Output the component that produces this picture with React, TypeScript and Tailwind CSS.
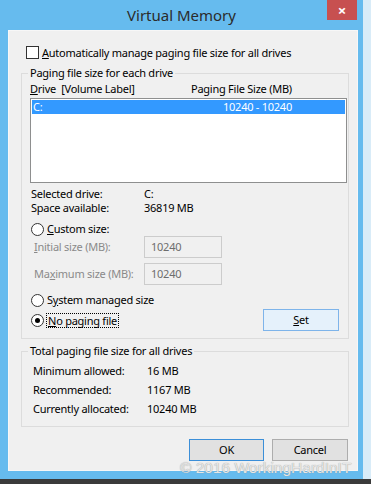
const font = { fontFamily: '"Segoe UI", "Noto Sans", "Liberation Sans", sans-serif' };

function Check() {
  return <span className="block h-[13px] w-[13px] shrink-0 border border-[#333] bg-white" />;
}

function Radio({ on }: { on?: boolean }) {
  return (
    <span className="flex h-[13px] w-[13px] shrink-0 items-center justify-center rounded-full border border-[#333] bg-white">
      {on && <span className="block h-[5px] w-[5px] rounded-full bg-black" />}
    </span>
  );
}

function Btn({ children, kind }: { children: React.ReactNode; kind?: "default" | "hover" }) {
  const look =
    kind === "default"
      ? "border-[#3c8fd8] bg-[#e1e1e1]"
      : kind === "hover"
        ? "border-[#7eb4ea] bg-[#e5f1fb]"
        : "border-[#adadad] bg-[#e1e1e1]";
  return (
    <div className={`flex h-[22px] items-center justify-center border text-[11px] text-black ${look}`}>{children}</div>
  );
}

function Group({ title, className, children }: { title: string; className: string; children: React.ReactNode }) {
  return (
    <div className={`relative ml-[12px] w-[328px] border border-[#dcdcdc] ${className}`}>
      <span className="absolute -top-[9px] left-[6px] bg-[#f0f0f0] px-[2px] text-[11px] leading-[16px] text-black">
        {title}
      </span>
      {children}
    </div>
  );
}

export default function App() {
  return (
    <div className="relative h-[484px] w-[371px] overflow-hidden bg-[#d9ecf8]" style={font}>
      <div className="flex h-[479px] w-[363px] flex-col bg-[#66bbee]">
        <div className="relative flex h-[30px] items-center justify-center">
          <span className="text-[15px] text-[#2b2b2b]">Virtual Memory</span>
          <div className="absolute right-[6px] top-0 flex h-[20px] w-[30px] items-center justify-center bg-[#c75050] text-[15px] font-bold leading-none text-white">
            ×
          </div>
        </div>

        <div className="ml-[8px] h-[441px] w-[350px] border border-[#f7f7f7] bg-[#f0f0f0] text-[11px] tracking-[-0.25px] text-black">
          <div className="ml-[17px] mt-[15px] flex h-[13px] items-center gap-[3px] leading-[13px]">
            <Check />
            <span>
              <u>A</u>utomatically manage paging file size for all drives
            </span>
          </div>

          <Group title="Paging file size for each drive" className="mt-[14px] h-[266px]">
            <div className="ml-[8px] mt-[8px] flex h-[15px] items-center">
              <span className="w-[161px]">
                <u>D</u>rive&nbsp; [Volume Label]
              </span>
              <span>Paging File Size (MB)</span>
            </div>
            <div className="ml-[8px] mt-[1px] h-[85px] w-[317px] border border-[#8e8f8f] bg-white">
              <div className="mx-[1px] mt-[1px] flex h-[14px] items-center bg-[#3399ff] pl-[1px] text-white">
                <span className="w-[190px]">C:</span>
                <span>10240 - 10240</span>
              </div>
            </div>

            <div className="ml-[9px] mt-[4px] flex h-[14px] items-center">
              <span className="w-[113px]">Selected drive:</span>
              <span>C:</span>
            </div>
            <div className="ml-[9px] flex h-[14px] items-center">
              <span className="w-[113px]">Space available:</span>
              <span>36819 MB</span>
            </div>

            <div className="ml-[9px] mt-[7px] flex h-[14px] items-center gap-[3px]">
              <Radio />
              <span>
                <u>C</u>ustom size:
              </span>
            </div>
            <div className="ml-[12px] flex h-[22px] items-center">
              <span className="w-[110px] text-[#8a8a8a]">
                <u>I</u>nitial size (MB):
              </span>
              <div className="flex h-[22px] w-[78px] items-center border border-[#cccccc] bg-[#f0f0f0] pl-[6px] text-[#6d6d6d]">
                10240
              </div>
            </div>
            <div className="ml-[12px] mt-[5px] flex h-[22px] items-center">
              <span className="w-[110px] text-[#8a8a8a]">
                Ma<u>x</u>imum size (MB):
              </span>
              <div className="flex h-[22px] w-[78px] items-center border border-[#cccccc] bg-[#f0f0f0] pl-[6px] text-[#6d6d6d]">
                10240
              </div>
            </div>

            <div className="ml-[9px] mt-[8px] flex h-[14px] items-center gap-[3px]">
              <Radio />
              <span>
                S<u>y</u>stem managed size
              </span>
            </div>
            <div className="ml-[9px] mr-[9px] mt-[2px] flex h-[22px] items-center justify-between">
              <div className="flex items-center gap-[2px]">
                <Radio on />
                <span className="border border-dotted border-black px-[1px] leading-[13px]">
                  <u>N</u>o paging file
                </span>
              </div>
              <div className="w-[76px]">
                <Btn kind="hover">
                  <u>S</u>et
                </Btn>
              </div>
            </div>
          </Group>

          <Group title="Total paging file size for all drives" className="mt-[12px] h-[76px]">
            <div className="ml-[11px] mt-[10px] flex flex-col">
              <div className="flex h-[19px] items-center">
                <span className="w-[114px]">Minimum allowed:</span>
                <span>16 MB</span>
              </div>
              <div className="flex h-[19px] items-center">
                <span className="w-[114px]">Recommended:</span>
                <span>1167 MB</span>
              </div>
              <div className="flex h-[19px] items-center">
                <span className="w-[114px]">Currently allocated:</span>
                <span>10240 MB</span>
              </div>
            </div>
          </Group>

          <div className="mr-[9px] mt-[12px] flex justify-end gap-[8px]">
            <div className="w-[75px]">
              <Btn kind="default">OK</Btn>
            </div>
            <div className="w-[76px]">
              <Btn>Cancel</Btn>
            </div>
          </div>
        </div>
      </div>
      <div className="h-[5px] w-full bg-[#3a3a3a]" />

      <span
        className="absolute left-[180px] top-[458px] whitespace-nowrap text-[15.5px] leading-[20px] text-[#e6e6e6] [text-shadow:0_0_1px_#8a8a8a]"
        style={{ fontFamily: '"Liberation Sans", Arial, sans-serif' }}
      >
        © 2016 WorkingHardInIT
      </span>
    </div>
  );
}
